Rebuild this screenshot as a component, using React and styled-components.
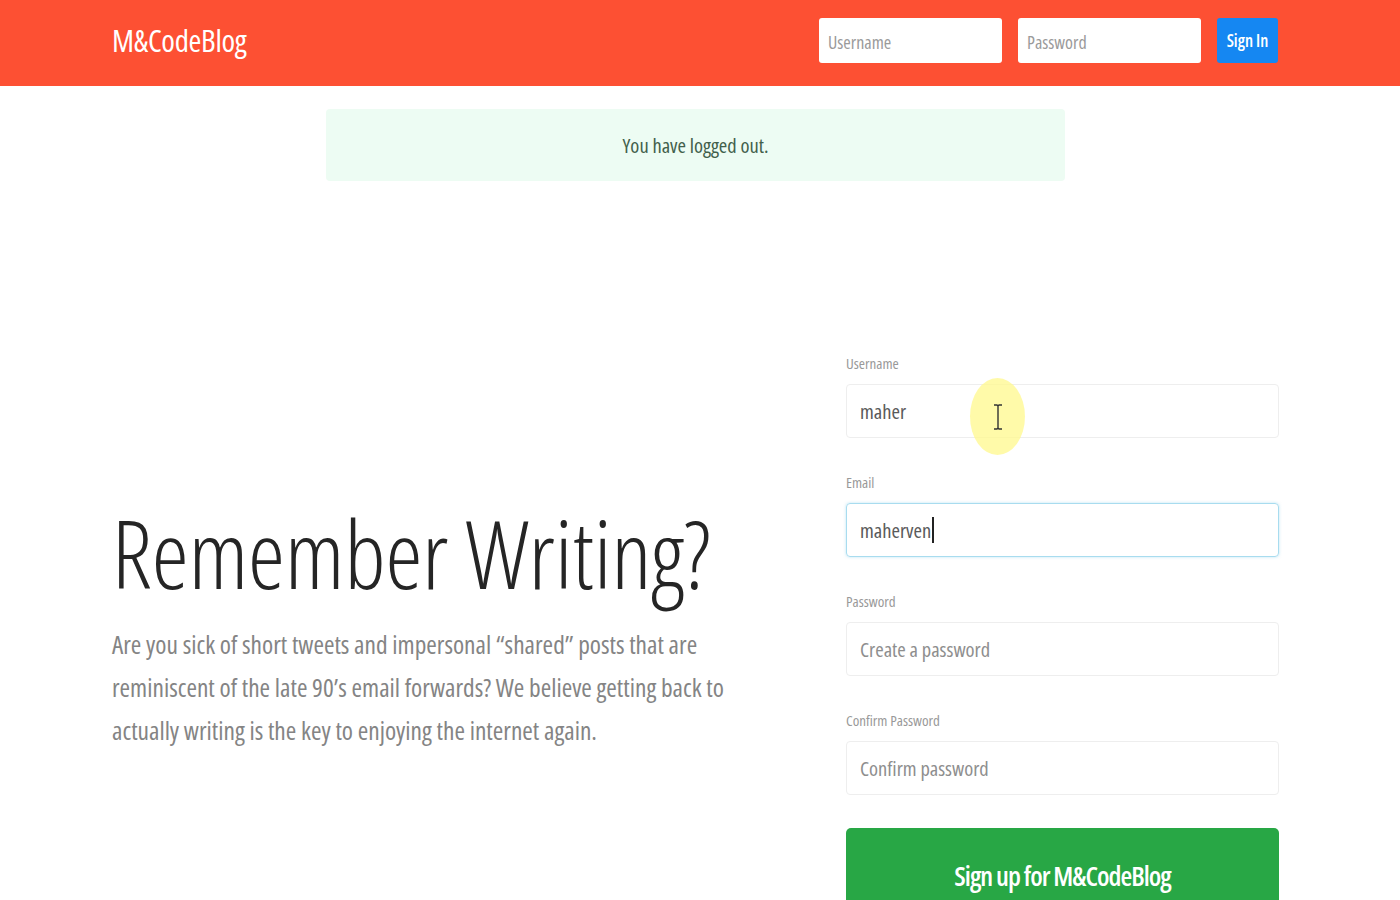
import styled, { createGlobalStyle } from "styled-components";

const GlobalStyle = createGlobalStyle`
    body {
        margin: 0;
        background: #ffffff;
        font-family: "Open Sans", "Noto Sans", sans-serif;
        font-stretch: 75%;
        overflow: hidden;
    }
    * { box-sizing: border-box; }
`

export default function App() {
    return (
        <>
            <GlobalStyle />
            <Navbar>
                <Brand>M&amp;CodeBlog</Brand>
                <LoginForm>
                    <NavInput placeholder="Username" />
                    <NavInput placeholder="Password" type="password" />
                    <SignIn>Sign In</SignIn>
                </LoginForm>
            </Navbar>
            <Container>
                <Alert>You have logged out.</Alert>
                <Row>
                    <Intro>
                        <h1>Remember Writing?</h1>
                        <p>
                            Are you sick of short tweets and impersonal “shared” posts that are
                            reminiscent of the late 90’s email forwards? We believe getting back to
                            actually writing is the key to enjoying the internet again.
                        </p>
                    </Intro>
                    <Form>
                        <Group>
                            <Label>Username</Label>
                            <Field>
                                <Input defaultValue="maher" />
                                <Highlight>
                                    <svg width="12" height="26" viewBox="0 0 12 26">
                                        <path d="M2 1h3l1 1 1-1h3M6 2v22M2 25h3l1-1 1 1h3" fill="none" stroke="#333" strokeWidth="1.4" />
                                    </svg>
                                </Highlight>
                            </Field>
                        </Group>
                        <Group>
                            <Label>Email</Label>
                            <FocusBox>
                                maherven<Caret />
                            </FocusBox>
                        </Group>
                        <Group>
                            <Label>Password</Label>
                            <Input placeholder="Create a password" type="password" />
                        </Group>
                        <Group>
                            <Label>Confirm Password</Label>
                            <Input placeholder="Confirm password" type="password" />
                        </Group>
                        <SignUp>Sign up for M&amp;CodeBlog</SignUp>
                    </Form>
                </Row>
            </Container>
        </>
    )
}

const Navbar = styled.header`
    height: 86px;
    background-color: #fd5033;
    display: flex;
    justify-content: space-between;
    align-items: center;
    padding: 0 122px 5px 112px;
`

const Brand = styled.div`
    color: #ffffff;
    font-size: 31px;
    letter-spacing: -0.3px;
    margin-top: -2px;
`

const LoginForm = styled.div`
    display: flex;
    gap: 16px;
`

const NavInput = styled.input`
    width: 183px;
    height: 45px;
    border: none;
    border-radius: 3px;
    padding: 2px 9px 0;
    font-family: inherit;
    font-stretch: 75%;
    font-size: 18px;
    color: #555;
    outline: none;

    &::placeholder {
        color: #9a9a9a;
    }
`

const SignIn = styled.button`
    width: 61px;
    height: 45px;
    border: none;
    border-radius: 3px;
    background-color: #1587f2;
    color: #ffffff;
    font-family: inherit;
    font-stretch: 75%;
    font-size: 17px;
    font-weight: 600;
    padding: 0;
`

const Container = styled.main`
    padding: 0 121px 0 112px;
`

const Alert = styled.div`
    width: 739px;
    height: 72px;
    margin: 23px auto 0;
    background-color: #edfcf3;
    border-radius: 4px;
    display: flex;
    align-items: center;
    justify-content: center;
    color: #42604b;
    font-size: 20.5px;
`

const Row = styled.section`
    display: grid;
    grid-template-columns: 1fr 433px;
    align-items: center;
    margin-top: 173px;
`

const Intro = styled.div`
    padding-bottom: 18px;

    h1 {
        margin: 0;
        font-size: 93.5px;
        font-weight: 350;
        line-height: 1;
        color: #252525;
    }

    p {
        margin: 24px 0 0;
        font-size: 25.4px;
        line-height: 43px;
        color: #848484;
        max-width: 640px;
    }
`

const Form = styled.form`
    display: flex;
    flex-direction: column;
`

const Group = styled.div`
    margin-bottom: 35px;
`

const Label = styled.label`
    display: block;
    font-size: 15px;
    line-height: 18px;
    color: #999999;
    margin-bottom: 12px;
`

const Field = styled.div`
    position: relative;
`

const Input = styled.input`
    width: 100%;
    height: 54px;
    border: 1px solid #eeeeee;
    border-radius: 4px;
    padding: 0 13px;
    font-family: inherit;
    font-stretch: 75%;
    font-size: 20.5px;
    color: #5a5a5a;
    outline: none;
    background: #ffffff;

    &::placeholder {
        color: #8e8e8e;
    }
`

const FocusBox = styled.div`
    height: 54px;
    border: 1px solid #a8dcef;
    border-radius: 4px;
    box-shadow: 0 0 3px rgba(120, 200, 235, 0.5);
    padding: 0 13px;
    display: flex;
    align-items: center;
    font-size: 20.5px;
    color: #5a5a5a;
`

const Caret = styled.span`
    display: inline-block;
    width: 1.5px;
    height: 26px;
    background: #222;
    margin-left: 1px;
`

const Highlight = styled.div`
    position: absolute;
    left: 124px;
    top: -6px;
    width: 55px;
    height: 77px;
    border-radius: 50%;
    background: rgba(255, 248, 140, 0.75);
    display: flex;
    align-items: center;
    justify-content: center;
    pointer-events: none;
`

const SignUp = styled.button`
    height: 94px;
    border: none;
    border-radius: 5px;
    background-color: #28a745;
    color: #ffffff;
    font-family: inherit;
    font-stretch: 75%;
    font-size: 27px;
    font-weight: 600;
    letter-spacing: -1px;
    margin-top: -2px;
`
